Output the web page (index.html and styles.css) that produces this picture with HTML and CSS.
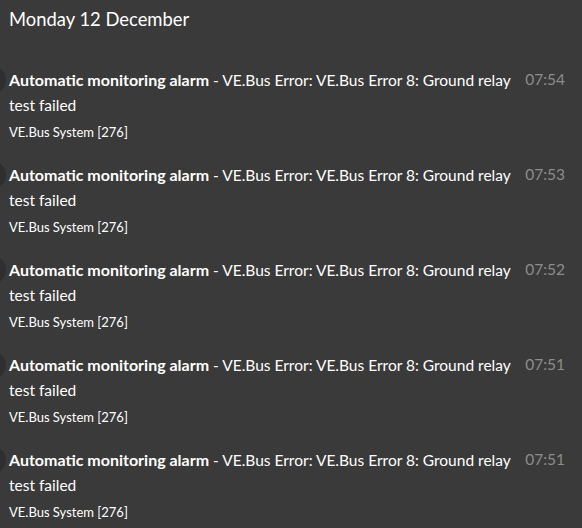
FILE: index.html
```html
<!DOCTYPE html>
<html>
<head>
<meta charset="utf-8">
<link rel="stylesheet" href="styles.css">
</head>
<body>
<div class="page">
  <h1 class="day">Monday 12 December</h1>
  <ul class="list">
    <li class="item">
      <span class="dot"></span>
      <div class="body">
        <div class="msg"><b>Automatic monitoring alarm</b> - VE.Bus Error: VE.Bus Error 8: Ground relay test failed</div>
        <div class="src">VE.Bus System [276]</div>
      </div>
      <div class="time">07:54</div>
    </li>
    <li class="item">
      <span class="dot"></span>
      <div class="body">
        <div class="msg"><b>Automatic monitoring alarm</b> - VE.Bus Error: VE.Bus Error 8: Ground relay test failed</div>
        <div class="src">VE.Bus System [276]</div>
      </div>
      <div class="time">07:53</div>
    </li>
    <li class="item">
      <span class="dot"></span>
      <div class="body">
        <div class="msg"><b>Automatic monitoring alarm</b> - VE.Bus Error: VE.Bus Error 8: Ground relay test failed</div>
        <div class="src">VE.Bus System [276]</div>
      </div>
      <div class="time">07:52</div>
    </li>
    <li class="item">
      <span class="dot"></span>
      <div class="body">
        <div class="msg"><b>Automatic monitoring alarm</b> - VE.Bus Error: VE.Bus Error 8: Ground relay test failed</div>
        <div class="src">VE.Bus System [276]</div>
      </div>
      <div class="time">07:51</div>
    </li>
    <li class="item">
      <span class="dot"></span>
      <div class="body">
        <div class="msg"><b>Automatic monitoring alarm</b> - VE.Bus Error: VE.Bus Error 8: Ground relay test failed</div>
        <div class="src">VE.Bus System [276]</div>
      </div>
      <div class="time">07:51</div>
    </li>
  </ul>
</div>
</body>
</html>
```

FILE: styles.css
```css
html, body {
  margin: 0;
  padding: 0;
  background: #3a3a3a;
  height: 100%;
  overflow: hidden;
}
.page {
  font-family: Lato, "Open Sans", sans-serif;
  color: #ffffff;
  padding: 7px 17px 0 9px;
}
.day {
  margin: 0;
  font-size: 18.4px;
  font-weight: 400;
  line-height: 24px;
}
.list {
  list-style: none;
  margin: 36px 0 0 0;
  padding: 0;
}
.item {
  display: flex;
  align-items: flex-start;
  height: 95px;
}
.dot {
  flex: none;
  width: 28px;
  height: 28px;
  border-radius: 50%;
  background: #2f2f2f;
  margin-left: -31px;
  margin-top: -1px;
  margin-right: 3px;
}
.body {
  flex: 1;
  min-width: 0;
}
.msg {
  font-size: 15.5px;
  line-height: 25px;
}
.msg b {
  font-weight: 700;
  font-size: 16px;
}
.src {
  font-size: 13px;
  line-height: 20px;
  margin-top: 4px;
}
.time {
  flex: none;
  margin-left: 13px;
  font-size: 15.5px;
  line-height: 25px;
  color: #8c8c8c;
}
```
